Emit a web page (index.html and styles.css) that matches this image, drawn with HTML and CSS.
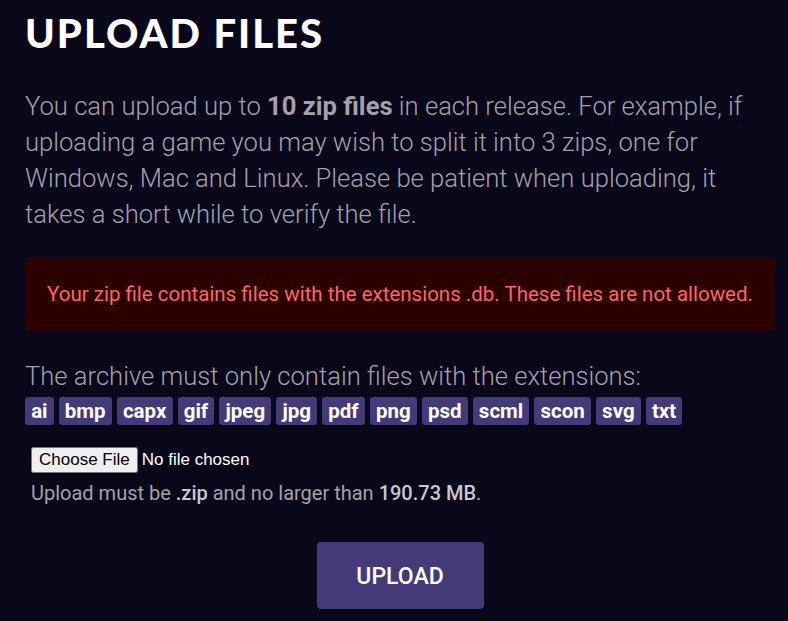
FILE: index.html
```html
<!DOCTYPE html>
<html>
<head>
<meta charset="utf-8">
<link rel="stylesheet" href="styles.css">
</head>
<body>
<main class="page">
  <h1 class="title">UPLOAD FILES</h1>
  <p class="intro">You can upload up to <strong>10 zip files</strong> in each release. For example, if uploading a game you may wish to split it into 3 zips, one for Windows, Mac and Linux. Please be patient when uploading, it takes a short while to verify the file.</p>
  <div class="error">Your zip file contains files with the extensions .db. These files are not allowed.</div>
  <p class="archive">The archive must only contain files with the extensions:</p>
  <div class="tags">
    <span class="tag">ai</span><span class="tag">bmp</span><span class="tag">capx</span><span class="tag">gif</span><span class="tag">jpeg</span><span class="tag">jpg</span><span class="tag">pdf</span><span class="tag">png</span><span class="tag">psd</span><span class="tag">scml</span><span class="tag">scon</span><span class="tag">svg</span><span class="tag">txt</span>
  </div>
  <div class="filebox">
    <input type="file" class="file">
    <p class="note">Upload must be <strong>.zip</strong> and no larger than <strong>190.73 MB</strong>.</p>
  </div>
  <div class="actions">
    <button class="upload">UPLOAD</button>
  </div>
</main>
</body>
</html>
```
FILE: styles.css
```css
html, body {
  margin: 0;
  padding: 0;
  background: #09071a;
}
.page {
  padding: 0 13px 0 25px;
  font-family: Roboto, "Liberation Sans", sans-serif;
}
.title {
  margin: 0;
  padding-top: 11px;
  font-family: Lato, sans-serif;
  font-weight: 900;
  font-size: 40px;
  line-height: 44px;
  letter-spacing: 2px;
  color: #ffffff;
}
.intro {
  margin: 33px 0 0;
  font-weight: 300;
  font-size: 25.6px;
  line-height: 36px;
  color: #a3a1ab;
}
.intro strong {
  font-weight: 700;
}
.error {
  margin-top: 25px;
  background: #2a0000;
  color: #ff6464;
  font-size: 20.5px;
  line-height: 24px;
  text-align: center;
  padding: 25px 0;
}
.archive {
  margin: 31px 0 0;
  font-weight: 300;
  font-size: 25.6px;
  line-height: 28px;
  color: #a3a1ab;
}
.tags {
  display: flex;
  flex-wrap: wrap;
  gap: 5px;
  margin-top: 7px;
}
.tag {
  background: #433a78;
  color: #ffffff;
  font-weight: 700;
  font-size: 20.5px;
  line-height: 28px;
  padding: 0 6.15px;
  border-radius: 3px;
}
.filebox {
  padding: 22px 6px 0;
}
.file {
  font-family: "Liberation Sans", Arial, sans-serif;
  font-size: 17px;
  color: #ffffff;
}
.file::file-selector-button {
  padding: 1px 6px;
}
.note {
  margin: 8px 0 0;
  font-size: 20px;
  line-height: 24px;
  color: #a3a1ab;
}
.note strong {
  font-weight: 500;
  color: #c9c7d0;
}
.actions {
  display: flex;
  justify-content: center;
  padding: 37px 0 0;
}
.upload {
  width: 167px;
  height: 67px;
  background: #433a78;
  color: #ffffff;
  border: 0;
  border-radius: 4px;
  font-family: Roboto, sans-serif;
  font-weight: 500;
  font-size: 23px;
  padding-top: 3px;
}
```
